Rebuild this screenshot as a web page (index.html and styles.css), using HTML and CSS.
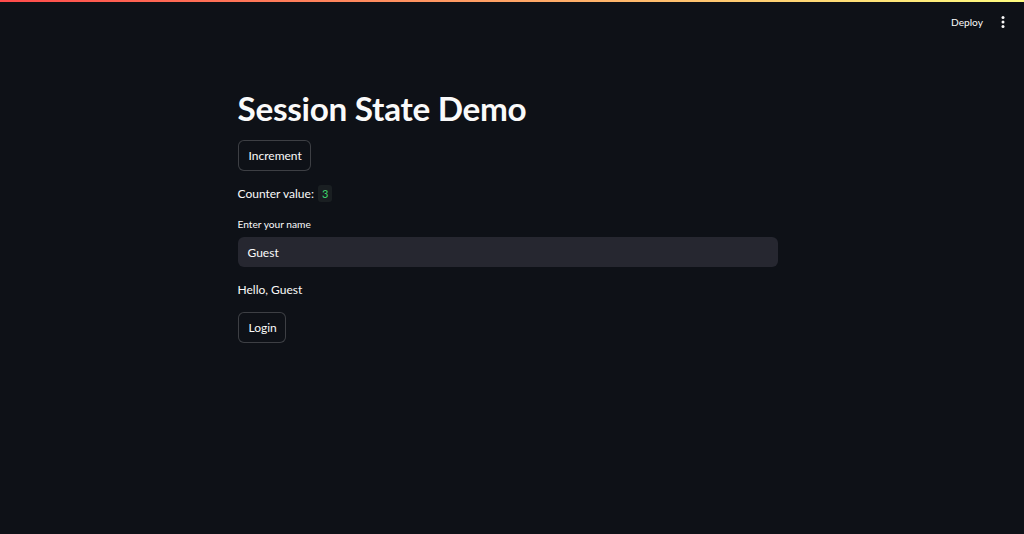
FILE: index.html
```html
<!DOCTYPE html>
<html>
<head>
<meta charset="utf-8">
<link rel="stylesheet" href="styles.css">
</head>
<body>
<div class="decoration"></div>
<header class="toolbar">
  <span class="deploy">Deploy</span>
  <span class="menu" aria-label="Main menu">
    <svg width="4" height="12" viewBox="0 0 4 12"><circle cx="2" cy="1.6" r="1.5" fill="#fafafa"/><circle cx="2" cy="6" r="1.5" fill="#fafafa"/><circle cx="2" cy="10.4" r="1.5" fill="#fafafa"/></svg>
  </span>
</header>
<main class="wrap">
  <div class="block">
    <h1 class="title">Session State Demo</h1>
    <button class="btn btn-increment">Increment</button>
    <p class="text counter">Counter value: <code class="code">3</code></p>
    <label class="label">Enter your name</label>
    <div class="input">Guest</div>
    <p class="text hello">Hello, Guest</p>
    <button class="btn btn-login">Login</button>
  </div>
</main>
</body>
</html>
```
FILE: styles.css
```css
html, body {
  margin: 0;
  padding: 0;
  background: #0e1117;
  color: #fafafa;
  font-family: Lato, "Liberation Sans", sans-serif;
  height: 100%;
  overflow: hidden;
}
.decoration {
  height: 2px;
  background: linear-gradient(90deg, #ff4b4b, #fffd80);
}
.toolbar {
  height: 40px;
  display: flex;
  align-items: center;
  justify-content: flex-end;
  padding-right: 19px;
  gap: 18px;
}
.deploy {
  font-size: 10.2px;
  color: #fafafa;
  line-height: 16px;
}
.menu {
  display: flex;
  align-items: center;
}
.wrap {
  display: flex;
  justify-content: center;
  padding-right: 9px;
}
.block {
  width: 540px;
  display: flex;
  flex-direction: column;
  align-items: flex-start;
  padding-top: 45px;
}
.title {
  margin: 0;
  font-size: 33.3px;
  font-weight: 700;
  line-height: 42px;
  letter-spacing: -0.3px;
}
.btn {
  margin-top: 11px;
  height: 31px;
  padding: 0 10px;
  border: 1px solid rgba(250, 250, 250, 0.2);
  border-radius: 6px;
  background: #0e1117;
  color: #fafafa;
  font-family: inherit;
  font-size: 12px;
}
.btn-increment {
  width: 73px;
}
.btn-login {
  margin-top: 12px;
  width: 48px;
}
.text {
  margin: 13px 0 0;
  font-size: 12px;
  line-height: 20px;
}
.hello {
  margin-top: 13px;
}
.code {
  font-family: Lato, sans-serif;
  font-size: 11px;
  color: #3dd56d;
  background: #1a1f22;
  padding: 2px 4px;
  border-radius: 3px;
  margin-left: 1px;
}
.label {
  margin-top: 12px;
  font-size: 10.2px;
  line-height: 16px;
}
.input {
  margin-top: 5px;
  width: 540px;
  box-sizing: border-box;
  height: 30px;
  background: #262730;
  border-radius: 6px;
  padding: 0 10px;
  display: flex;
  align-items: center;
  font-size: 12px;
}
```
